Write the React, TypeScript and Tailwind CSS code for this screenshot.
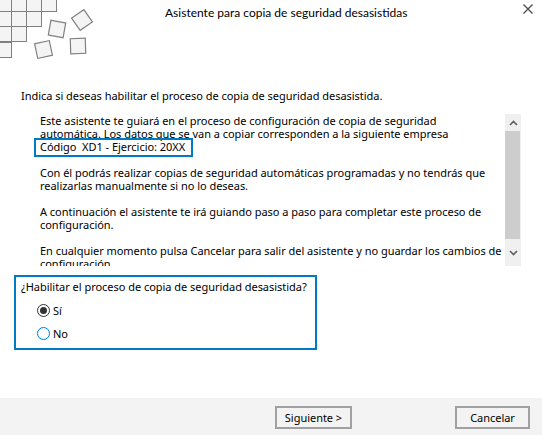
const font = { fontFamily: '"Noto Sans", sans-serif' };

function Logo() {
  const cells = [
    [-4, -4], [11, -4], [26, -4], [41, -4],
    [-4, 11], [11, 11], [26, 11],
    [-4, 26], [11, 26],
    [-4, 42],
  ];
  const loose = [
    { x: 57, y: 29, r: 10 },
    { x: 82, y: 20, r: -35 },
    { x: 43.5, y: 49.5, r: -12 },
    { x: 78, y: 46, r: -2 },
  ];
  return (
    <svg width="100" height="62" viewBox="0 0 100 62" className="block">
      {cells.map(([x, y]) => (
        <rect key={`${x}-${y}`} x={x + 0.5} y={y + 0.5} width="15" height="15" fill="#f4f4f4" stroke="#808080" />
      ))}
      {loose.map((s) => (
        <rect
          key={s.x}
          x={s.x - 7.5}
          y={s.y - 7.5}
          width="15"
          height="15"
          fill="#f4f4f4"
          stroke="#808080"
          strokeWidth="1.2"
          transform={`rotate(${s.r} ${s.x} ${s.y})`}
        />
      ))}
    </svg>
  );
}

function Radio({ label, checked }: { label: string; checked?: boolean }) {
  return (
    <div className="flex h-[23px] items-center gap-[3px] pl-[21px]">
      <span
        className={
          checked
            ? 'flex size-[13px] items-center justify-center rounded-full border border-[#333333] bg-white'
            : 'flex size-[13px] items-center justify-center rounded-full border border-[#0078d7] bg-white'
        }>
        {checked && <span className="size-[7px] rounded-full bg-[#333333]" />}
      </span>
      <span>{label}</span>
    </div>
  );
}

function Scrollbar() {
  return (
    <div className="flex w-4 shrink-0 flex-col bg-[#f0f0f0]">
      <div className="flex h-[17px] items-center justify-center">
        <svg width="9" height="6" viewBox="0 0 9 6">
          <path d="M1 5 L4.5 1.5 L8 5" fill="none" stroke="#606060" strokeWidth="1.6" />
        </svg>
      </div>
      <div className="h-[108px] w-[15px] bg-[#cdcdcd]" />
      <div className="flex flex-1 items-center justify-center">
        <svg width="9" height="6" viewBox="0 0 9 6">
          <path d="M1 1 L4.5 4.5 L8 1" fill="none" stroke="#606060" strokeWidth="1.6" />
        </svg>
      </div>
    </div>
  );
}

export default function App() {
  return (
    <div
      className="relative flex h-[435px] w-[542px] flex-col overflow-hidden bg-white text-[11px] leading-[13px] tracking-[-0.03px] whitespace-nowrap text-black"
      style={font}>
      <div className="flex h-[89px] shrink-0 items-start justify-between">
        <Logo />
        <div className="mt-[6px] ml-[65px] flex-1 font-['Lato'] text-[12px] tracking-normal">
          Asistente para copia de seguridad desasistidas
        </div>
        <svg width="10" height="10" viewBox="0 0 10 10" className="mt-1 mr-[9px]">
          <path d="M0.5 0.5 L9.5 9.5 M9.5 0.5 L0.5 9.5" stroke="#505050" strokeWidth="1.4" />
        </svg>
      </div>

      <p className="pl-[21px]">Indica si deseas habilitar el proceso de copia de seguridad desasistida.</p>

      <div className="mt-3 ml-[40px] flex h-[152px] w-[481px] shrink-0">
        <div className="flex-1 overflow-hidden">
          <div className="space-y-[13px]">
            <p>
              Este asistente te guiará en el proceso de configuración de copia de seguridad
              <br />
              automática. Los datos que se van a copiar corresponden a la siguiente empresa
              <br />
              <span className="whitespace-pre">Código  XD1 - Ejercicio: 20XX</span>
            </p>
            <p>
              Con él podrás realizar copias de seguridad automáticas programadas y no tendrás que
              <br />
              realizarlas manualmente si no lo deseas.
            </p>
            <p>
              A continuación el asistente te irá guiando paso a paso para completar este proceso de
              <br />
              configuración.
            </p>
            <p>
              En cualquier momento pulsa Cancelar para salir del asistente y no guardar los cambios de
              <br />
              configuración.
            </p>
          </div>
        </div>
        <Scrollbar />
      </div>

      <div className="mt-[9px] ml-[14px] h-[75px] w-[303px] shrink-0 border-2 border-[#007ac3] pt-[3px]">
        <p className="mb-[6px] pl-[5px]">¿Habilitar el proceso de copia de seguridad desasistida?</p>
        <Radio label="Sí" checked />
        <Radio label="No" />
      </div>

      <div className="mt-auto flex h-[37px] items-start justify-between bg-[#f3f3f3] pt-2 pr-3 pl-[275px]">
        <button className="h-[23px] w-[77px] border-2 border-[#a0a0a0] bg-[#f3f3f3]">Siguiente &gt;</button>
        <button className="h-[23px] w-[75px] border-2 border-[#a0a0a0] bg-[#f3f3f3]">Cancelar</button>
      </div>

      <div className="absolute top-[138px] left-[34px] h-[19px] w-[159px] border-2 border-[#007ac3]" />
    </div>
  );
}
